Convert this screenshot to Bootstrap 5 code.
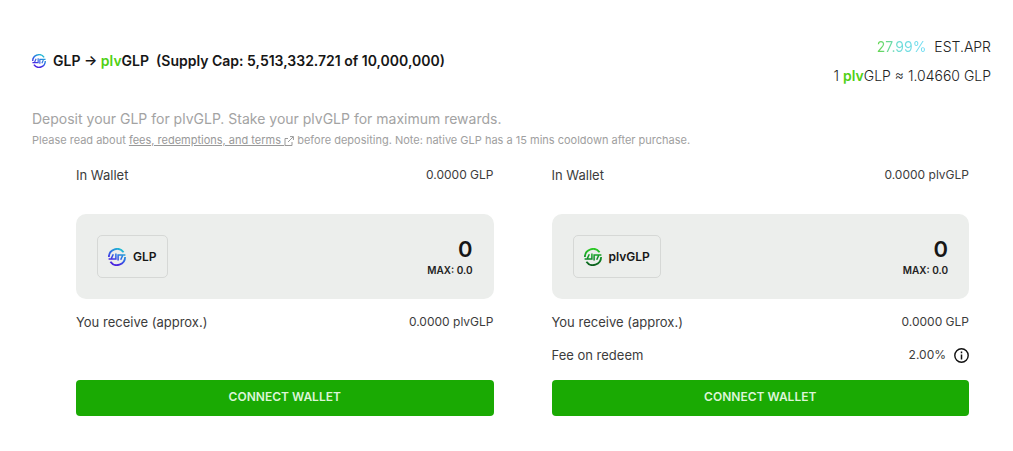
<!DOCTYPE html>
<html lang="en">
<head>
<meta charset="utf-8">
<meta name="viewport" content="width=device-width, initial-scale=1">
<title>plvGLP Vault</title>
<link href="https://cdn.jsdelivr.net/npm/bootstrap@5.3.0/dist/css/bootstrap.min.css" rel="stylesheet">
<style>
  body { font-family: Inter, "Liberation Sans", sans-serif; font-size: 12px; line-height: 20px; color: #3c3c3c; background: #fff; }
  .vault { padding: 32px 22px 32px 32px; }
  .title { font-size: 14px; line-height: 20px; font-weight: 600; color: #161616; margin: 0; gap: 7px; }
  .rates { font-size: 14px; line-height: 29px; font-weight: 300; color: #222; }
  .brand { color: #50d016; font-weight: 600; }
  .apr { font-weight: 400; background: linear-gradient(90deg, #62d548, #6fdcd8 45%, #6fdcf5); -webkit-background-clip: text; background-clip: text; color: transparent; }
  .intro { font-size: 14px; line-height: 22px; color: #a3a3a3; margin-top: 18px; }
  .note { font-size: 11px; line-height: 20px; color: #a0a0a0; }
  .note a { color: #999; }
  .panels { display: grid; grid-template-columns: 1fr 1fr; column-gap: 58px; padding: 15px 22px 0 44px; }
  .term { font-size: 13px; }
  .amount-box { background: #eceeec; border-radius: 10px; min-height: 85px; margin: 29px 0 13px; padding: 20px 21px; }
  .token { border: 1px solid #d6d8d6; border-radius: 5px; height: 43px; padding: 0 10px; gap: 7px; font-size: 12px; font-weight: 600; color: #161616; }
  .amount { width: 100%; font-size: 22px; line-height: 26px; height: 26px; font-weight: 600; color: #161616; text-align: right; border: 0; background: transparent; padding: 0; }
  .max { font-size: 10px; line-height: 16px; font-weight: 600; color: #222; border: 0; background: transparent; padding: 0; }
  .fee { margin-top: 13px; }
  .connect { --bs-btn-bg: #1aaa03; --bs-btn-hover-bg: #179702; --bs-btn-active-bg: #148402; --bs-btn-color: #dcf5d8; --bs-btn-hover-color: #fff; --bs-btn-border-width: 0; font-size: 12px; line-height: 20px; font-weight: 600; height: 36px; border-radius: 4px; padding: 7px 16px 9px; }
  .fee + .connect { margin-top: 15px; }
</style>
</head>
<body>
<svg width="0" height="0" class="position-absolute" aria-hidden="true">
  <defs>
    <linearGradient id="blue" gradientUnits="userSpaceOnUse" x1="14" y1="1" x2="4" y2="17"><stop offset="0" stop-color="#1fc4d0"/><stop offset=".5" stop-color="#2f62e6"/><stop offset=".8" stop-color="#4a25e0"/></linearGradient>
    <linearGradient id="green" gradientUnits="userSpaceOnUse" x1="9" y1="0" x2="9" y2="18"><stop offset="0" stop-color="#2fce25"/><stop offset=".5" stop-color="#12962a"/><stop offset="1" stop-color="#0a5a1c"/></linearGradient>
    <symbol id="coin" viewBox="0 0 18 18">
      <path fill="none" stroke-width="1.8" d="M.9 9A8.1 8.1 0 0 1 15.6 4.3M17.1 9A8.1 8.1 0 0 1 2.4 13.7"/>
      <path fill="none" stroke-width="1.5" d="M.6 11H7.9V5.4M5.3 6.2 3.4 10.4M17.4 7H10.1V12.6M12.7 11.8 14.6 7.6"/>
    </symbol>
  </defs>
</svg>
<main class="vault">
  <header class="d-flex justify-content-between align-items-center">
    <h1 class="title d-flex align-items-center">
      <svg width="14" height="14" stroke="url(#blue)" aria-hidden="true"><use href="#coin"/></svg>
      <span>GLP → <span class="brand">plv</span>GLP&nbsp; (Supply Cap: 5,513,332.721 of 10,000,000)</span>
    </h1>
    <div class="rates text-end">
      <div><span class="apr">27.99%</span>&nbsp; EST.APR</div>
      <div>1 <span class="brand">plv</span>GLP ≈ 1.04660 GLP</div>
    </div>
  </header>
  <p class="intro mb-0">Deposit your GLP for plvGLP. Stake your plvGLP for maximum rewards.</p>
  <p class="note mb-0">Please read about <a href="#terms">fees, redemptions, and terms <svg width="10" height="10" viewBox="0 0 10 10" fill="none" stroke="currentColor" aria-hidden="true"><path d="M4 2.5H1v7h7V6M6 .6h3.4V4M9.2.8 4 6"/></svg></a> before depositing. Note: native GLP has a 15 mins cooldown after purchase.</p>

  <div class="panels">
    <section class="d-flex flex-column" aria-label="Deposit GLP">
      <div class="d-flex justify-content-between"><span class="term">In Wallet</span><span>0.0000 GLP</span></div>
      <div class="amount-box d-flex align-items-center justify-content-between">
        <label class="token d-flex align-items-center" for="glp">
          <svg width="18" height="18" stroke="url(#blue)" aria-hidden="true"><use href="#coin"/></svg>GLP
        </label>
        <div class="d-flex flex-column align-items-end">
          <input class="amount" id="glp" type="text" inputmode="decimal" value="0">
          <button class="max" type="button">MAX: 0.0</button>
        </div>
      </div>
      <div class="d-flex justify-content-between"><span class="term">You receive (approx.)</span><span>0.0000 plvGLP</span></div>
      <button class="btn connect w-100 mt-auto" type="button">CONNECT WALLET</button>
    </section>
    <section class="d-flex flex-column" aria-label="Redeem plvGLP">
      <div class="d-flex justify-content-between"><span class="term">In Wallet</span><span>0.0000 plvGLP</span></div>
      <div class="amount-box d-flex align-items-center justify-content-between">
        <label class="token d-flex align-items-center" for="plvglp">
          <svg width="18" height="18" stroke="url(#green)" aria-hidden="true"><use href="#coin"/></svg>plvGLP
        </label>
        <div class="d-flex flex-column align-items-end">
          <input class="amount" id="plvglp" type="text" inputmode="decimal" value="0">
          <button class="max" type="button">MAX: 0.0</button>
        </div>
      </div>
      <div class="d-flex justify-content-between"><span class="term">You receive (approx.)</span><span>0.0000 GLP</span></div>
      <div class="fee d-flex justify-content-between">
        <span class="term">Fee on redeem</span>
        <span class="d-flex align-items-center gap-2">2.00%
          <button class="border-0 bg-transparent p-0 d-flex" type="button" aria-label="Fee details"><svg width="15" height="15" viewBox="0 0 15 15" aria-hidden="true"><circle cx="7.5" cy="7.5" r="6.7" fill="none" stroke="#111" stroke-width="1.4"/><path d="M7.5 3.6v1.6M7.5 6.4v5" stroke="#111" stroke-width="1.5"/></svg></button>
        </span>
      </div>
      <button class="btn connect w-100" type="button">CONNECT WALLET</button>
    </section>
  </div>
</main>
<script src="https://cdn.jsdelivr.net/npm/bootstrap@5.3.0/dist/js/bootstrap.bundle.min.js"></script>
</body>
</html>
